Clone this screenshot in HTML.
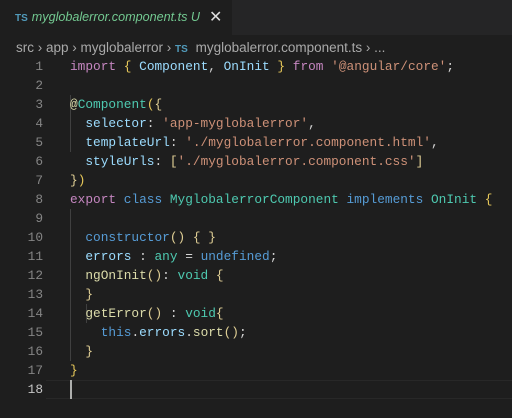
<!DOCTYPE html>
<html><head><style>
body{margin:0;width:512px;height:412px;background:#1e1e1e;overflow:hidden;font-family:"Liberation Sans",sans-serif;position:relative}
.tabbar{position:absolute;left:0;top:0;width:512px;height:35px;background:#252526}
.tab{position:absolute;left:0;top:0;width:232px;height:35px;background:#1e1e1e;color:#73c991;font-style:italic;font-size:12.6px;line-height:35px;white-space:nowrap}
.ts{font-style:normal;font-weight:bold;color:#519aba;font-size:10px;margin-left:15px;margin-right:4px}
.x{font-style:normal;color:#ddd;position:absolute;left:209px;font-size:16px}
.bc{position:absolute;left:16px;top:38px;color:#a9a9a9;font-size:13.5px;line-height:19px;white-space:pre}
.bc .ts{margin-left:0}
.code{position:absolute;left:0;top:57px;font-family:"Liberation Mono",monospace;font-size:12.8px;line-height:19px;white-space:pre;color:#d4d4d4}
.ln{position:absolute;left:0;width:43px;text-align:right;color:#858585}
.l{position:absolute;left:70px}
.k{color:#c586c0}.b{color:#569cd6}.v{color:#9cdcfe}.s{color:#ce9178}.t{color:#4ec9b0}.f{color:#dcdcaa}.y{color:#e8c95a}.p{color:#e0cf95}
.g{position:absolute;width:1px;background:#404040}
</style></head><body>
<div class="tabbar"><div class="tab"><span class="ts">TS</span>myglobalerror.component.ts U<span class="x">✕</span></div></div>
<div class="bc">src › app › myglobalerror › <span class="ts" style="color:#519aba">TS</span> myglobalerror.component.ts › ...</div>
<div class="g" style="left:70px;top:95px;height:57px"></div>
<div class="g" style="left:70px;top:209px;height:152px"></div>
<div class="g" style="left:86px;top:304px;height:19px"></div>
<div style="position:absolute;left:46px;right:0;top:380px;height:19px;border-top:1px solid #282828;border-bottom:1px solid #282828;box-sizing:border-box"></div>
<div style="position:absolute;left:70px;top:380px;width:2px;height:19px;background:#aeafad"></div>
<div class="code">
<div class="ln" style="top:0">1</div><div class="l" style="top:0"><span class="k">import</span> <span class="y">{</span> <span class="v">Component</span>, <span class="v">OnInit</span> <span class="y">}</span> <span class="k">from</span> <span class="s">'@angular/core'</span>;</div>
<div class="ln" style="top:19px">2</div>
<div class="ln" style="top:38px">3</div><div class="l" style="top:38px"><span class="f">@</span><span class="t">Component</span><span class="y">(</span><span class="p">{</span></div>
<div class="ln" style="top:57px">4</div><div class="l" style="top:57px">  <span class="v">selector</span>: <span class="s">'app-myglobalerror'</span>,</div>
<div class="ln" style="top:76px">5</div><div class="l" style="top:76px">  <span class="v">templateUrl</span>: <span class="s">'./myglobalerror.component.html'</span>,</div>
<div class="ln" style="top:95px">6</div><div class="l" style="top:95px">  <span class="v">styleUrls</span>: <span class="p">[</span><span class="s">'./myglobalerror.component.css'</span><span class="p">]</span></div>
<div class="ln" style="top:114px">7</div><div class="l" style="top:114px"><span class="p">}</span><span class="y">)</span></div>
<div class="ln" style="top:133px">8</div><div class="l" style="top:133px"><span class="k">export</span> <span class="b">class</span> <span class="t">MyglobalerrorComponent</span> <span class="b">implements</span> <span class="t">OnInit</span> <span class="y">{</span></div>
<div class="ln" style="top:152px">9</div>
<div class="ln" style="top:171px">10</div><div class="l" style="top:171px">  <span class="b">constructor</span><span class="p">()</span> <span class="p">{ }</span></div>
<div class="ln" style="top:190px">11</div><div class="l" style="top:190px">  <span class="v">errors</span> : <span class="t">any</span> = <span class="b">undefined</span>;</div>
<div class="ln" style="top:209px">12</div><div class="l" style="top:209px">  <span class="f">ngOnInit</span><span class="p">()</span>: <span class="t">void</span> <span class="p">{</span></div>
<div class="ln" style="top:228px">13</div><div class="l" style="top:228px">  <span class="p">}</span></div>
<div class="ln" style="top:247px">14</div><div class="l" style="top:247px">  <span class="f">getError</span><span class="p">()</span> : <span class="t">void</span><span class="p">{</span></div>
<div class="ln" style="top:266px">15</div><div class="l" style="top:266px">    <span class="b">this</span>.<span class="v">errors</span>.<span class="f">sort</span><span class="p">()</span>;</div>
<div class="ln" style="top:285px">16</div><div class="l" style="top:285px">  <span class="p">}</span></div>
<div class="ln" style="top:304px">17</div><div class="l" style="top:304px"><span class="y">}</span></div>
<div class="ln" style="top:323px;color:#c6c6c6">18</div>
</div>
</body></html>
